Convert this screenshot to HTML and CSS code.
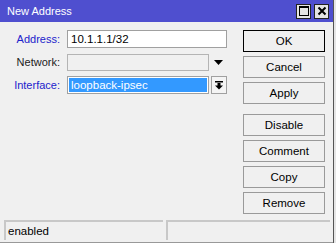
FILE: index.html
```html
<!DOCTYPE html>
<html lang="en">
<head>
  <meta charset="UTF-8">
  <title>New Address</title>
  <link rel="stylesheet" href="styles.css">
</head>
<body>

  <div class="window">
    <div class="titlebar">
      <span class="title">New Address</span>
      <div class="tb-buttons">
        <span class="tb-btn"><span class="max-icon"></span></span>
        <span class="tb-btn">
          <svg width="10" height="10" viewBox="0 0 10 10"><path d="M1.5 1.5 L8.5 8.5 M8.5 1.5 L1.5 8.5" stroke="#000" stroke-width="2"/></svg>
        </span>
      </div>
    </div>

    <div class="content">
      <!-- fields -->
      <div class="fields">
        <div class="row">
          <label class="lbl blue">Address:</label>
          <div class="input wide">10.1.1.1/32</div>
        </div>
        <div class="row">
          <label class="lbl">Network:</label>
          <div class="input disabled"></div>
          <span class="arrow">
            <svg width="9" height="5" viewBox="0 0 9 5"><path d="M0 0 H9 L4.5 5 Z" fill="#000"/></svg>
          </span>
        </div>
        <div class="row">
          <label class="lbl blue">Interface:</label>
          <div class="input selected"><span>loopback-ipsec</span></div>
          <span class="drop-btn">
            <svg width="8" height="9" viewBox="0 0 8 9"><path d="M0 0 H8 V1.5 H0 Z M2.5 2 H5.5 V4.5 H8 L4 8.5 L0 4.5 H2.5 Z" fill="#000"/></svg>
          </span>
        </div>
      </div>

      <!-- buttons -->
      <div class="buttons">
        <button class="btn default">OK</button>
        <button class="btn">Cancel</button>
        <button class="btn">Apply</button>
        <button class="btn sep">Disable</button>
        <button class="btn">Comment</button>
        <button class="btn">Copy</button>
        <button class="btn">Remove</button>
      </div>
    </div>

    <div class="statusbar">
      <div class="panel">enabled</div>
      <div class="panel"></div>
    </div>
  </div>

</body>
</html>
```

FILE: styles.css
```css
html { background: #e6e6e6; }
body { margin: 0; font-family: "Liberation Sans", Arial, sans-serif; font-size: 11px; color: #000; }
.window { width: 334px; height: 243px; background: #f0f0f0; border-right: 1px solid #555; display: flex; flex-direction: column; box-sizing: border-box; }

.titlebar { height: 22px; background: #4f4fcf; display: flex; align-items: center; justify-content: space-between; padding: 0 4px 0 7px; }
.title { color: #fff; font-size: 11px; }
.tb-buttons { display: flex; gap: 3px; }
.tb-btn { width: 13px; height: 13px; background: #e4e4e4; border: 1px solid #222; display: flex; align-items: center; justify-content: center; }
.max-icon { width: 8px; height: 7px; border: 1px solid #000; border-top-width: 2px; }

.content { display: flex; justify-content: space-between; padding: 7px 8px 0 0; flex: 1; }
.fields { padding-top: 1px; }
.row { display: flex; align-items: center; height: 18px; margin-bottom: 5px; }
.lbl { width: 60px; text-align: right; margin-right: 7px; color: #222; }
.lbl.blue { color: #2222cc; }
.input { width: 142px; height: 18px; box-sizing: border-box; border: 1px solid #a0a0a0; background: #fff; padding: 1px 3px; line-height: 14px; font-size: 11.5px; }
.input.wide { width: 160px; }
.input.disabled { height: 17px; border-color: #b4b4b4; background: #f0f0f0; }
.input.selected { padding: 1px; }
.input.selected span { display: block; height: 14px; background: #3399ff; color: #fff; padding: 0 2px; line-height: 14px; }
.arrow { width: 18px; display: flex; justify-content: center; }
.drop-btn { width: 16px; height: 18px; box-sizing: border-box; margin-left: 2px; border: 1px solid #a0a0a0; background: #f4f4f4; display: flex; align-items: center; justify-content: center; }

.buttons { display: flex; flex-direction: column; gap: 4px; width: 82px; padding-top: 1px; }
.btn { height: 22px; background: #f0f0f0; border: 1px solid #9a9a9a; font-family: inherit; font-size: 11.5px; color: #000; padding: 0; }
.btn.default { border-color: #000; }
.btn.sep { margin-top: 6px; }

.statusbar { display: flex; gap: 3px; padding: 0 3px 2px 4px; border-bottom: 1px solid #999; }
.panel { flex: 1; height: 20px; box-sizing: border-box; border-top: 2px solid #c8c8c8; border-left: 2px solid #c8c8c8; padding: 2px 2px; line-height: 15px; font-size: 11.5px; }
.panel:first-child { flex: 0 0 159px; }
```
